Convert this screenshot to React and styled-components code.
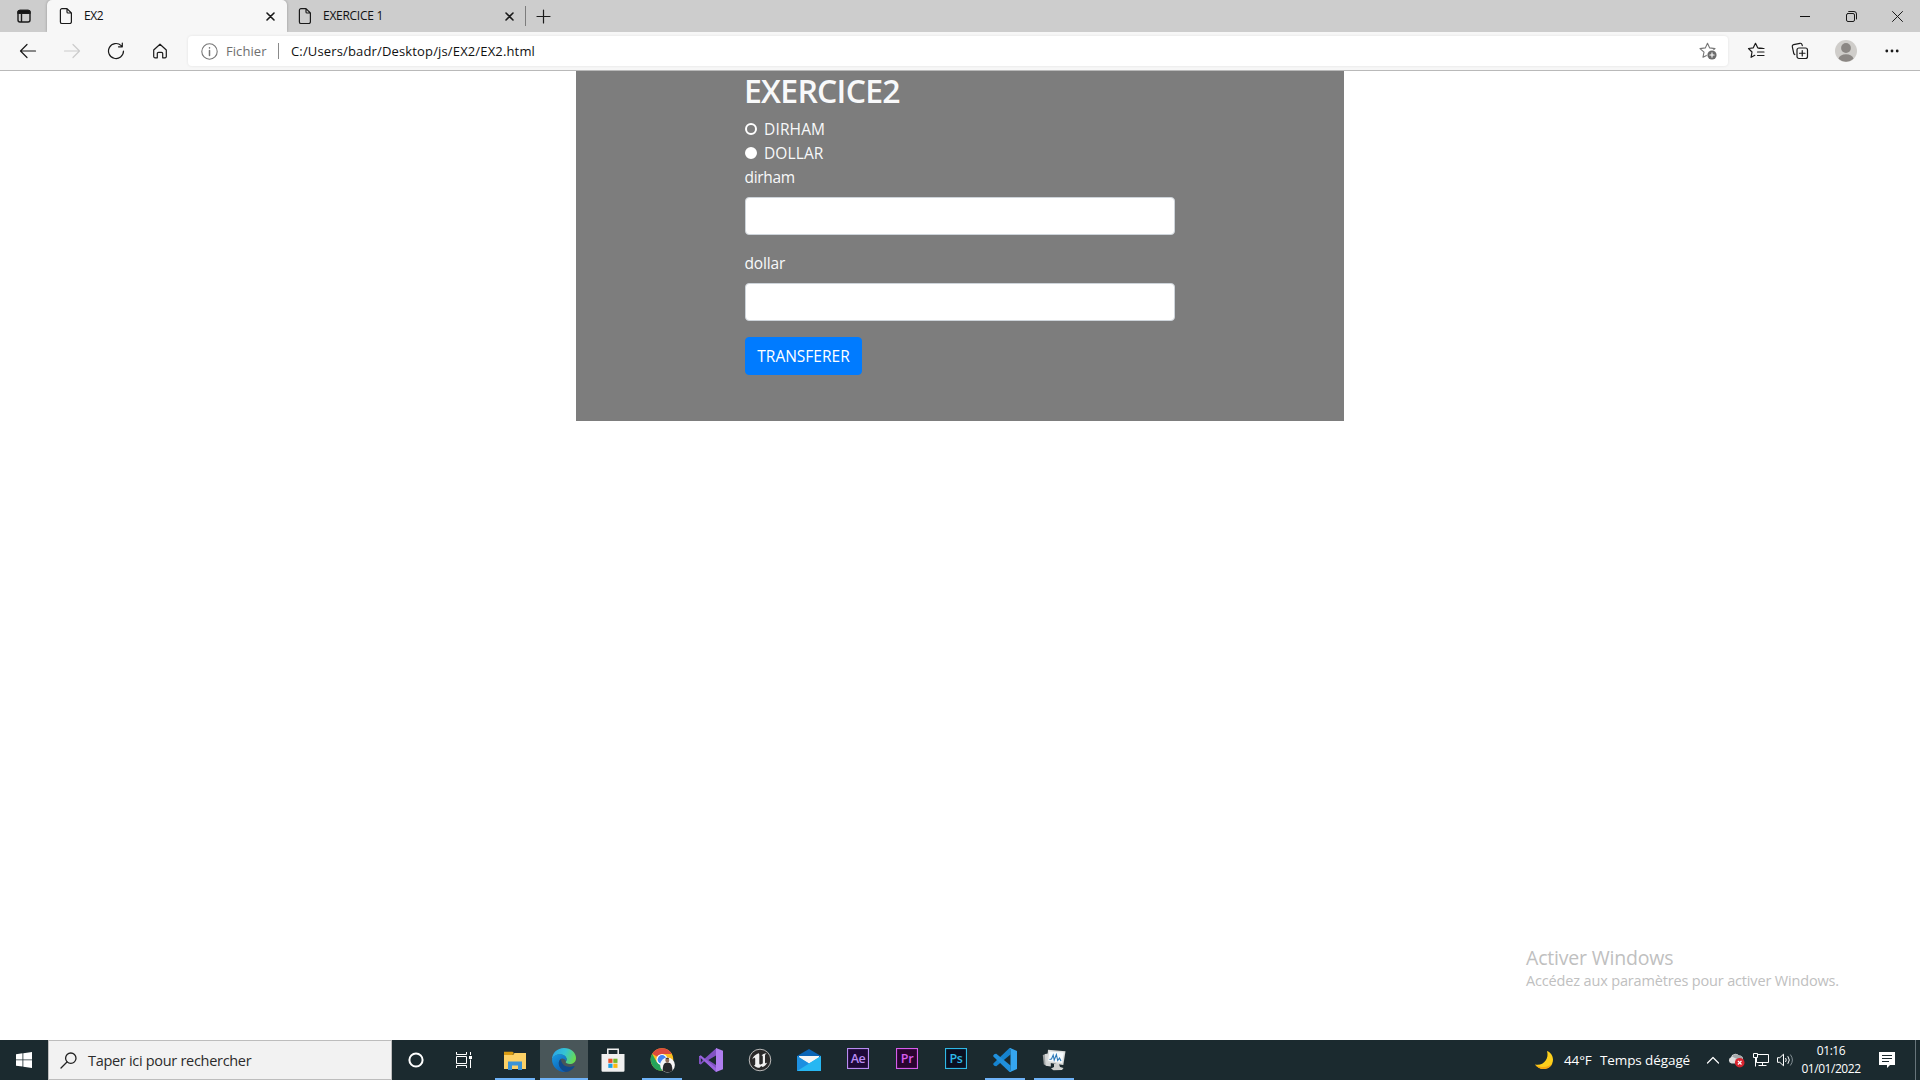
import React, { useState } from "react";
import styled, { createGlobalStyle } from "styled-components";

const Global = createGlobalStyle`
  * { box-sizing: border-box; }
  body { margin: 0; background: #fff; overflow: hidden; }
  svg { display: block; flex: none; }
`;

const Screen = styled.div`
  position: relative;
  width: 1920px;
  height: 1080px;
  display: flex;
  flex-direction: column;
  font-family: "Open Sans", "Noto Sans", sans-serif;
  color: #111;
  background: #fff;
`;

const Text = styled.span`
  font-size: ${(p) => p.$size}px;
  letter-spacing: ${(p) => p.$track || 0}px;
  color: ${(p) => p.$color || "inherit"};
  white-space: nowrap;
`;

/* Browser chrome */
const TabStrip = styled.header`
  display: flex;
  height: 32px;
  background: #cdcdcd;
`;
const TabActions = styled.div`
  width: 47px;
  display: flex;
  align-items: center;
  padding-left: 16px;
`;
const Tab = styled.div`
  width: ${(p) => p.$width}px;
  height: 32px;
  display: flex;
  align-items: center;
  padding: 0 ${(p) => p.$right}px 0 ${(p) => p.$left}px;
  background: ${(p) => (p.$active ? "#f7f7f7" : "transparent")};
  border-radius: 5px 5px 0 0;
  box-shadow: ${(p) => (p.$active ? "0 0 3px rgba(0, 0, 0, 0.28)" : "none")};
  clip-path: inset(0 -4px 0 -4px);
`;
const TabTitle = styled(Text)`
  flex: 1;
  padding: 0 0 1px 11px;
`;
const NewTab = styled.div`
  display: flex;
  align-items: center;
  height: 32px;
  gap: 10px;
`;
const TabDivider = styled.div`
  width: 1px;
  height: 20px;
  background: #7c7c7c;
`;
const WindowButtons = styled.div`
  margin-left: auto;
  display: flex;
`;
const WindowButton = styled.div`
  width: 46px;
  height: 32px;
  display: flex;
  align-items: center;
  justify-content: center;
`;

const Toolbar = styled.div`
  display: flex;
  align-items: center;
  height: 39px;
  background: #f7f7f7;
  border-bottom: 1px solid #b9b9b9;
`;
const NavButton = styled.div`
  width: 44px;
  height: 38px;
  display: flex;
  align-items: center;
  justify-content: center;
`;
const NavGroup = styled.div`
  display: flex;
  width: 188px;
  padding-left: 6px;
`;
const AddressBar = styled.div`
  width: 1540px;
  height: 30px;
  display: flex;
  align-items: center;
  padding: 0 11px 0 13px;
  background: #fff;
  border-radius: 4px;
  box-shadow: 0 0 3px rgba(0, 0, 0, 0.09);
`;
const SchemeLabel = styled(Text)`
  margin-left: 8px;
  width: 52px;
`;
const AddressDivider = styled.div`
  width: 1px;
  height: 16px;
  margin-right: 12px;
  background: #8a8a8a;
`;
const Url = styled(Text)`
  flex: 1;
`;
const ToolGroup = styled.div`
  display: flex;
  align-items: center;
  padding-left: 5px;
`;
const ToolButton = styled.div`
  width: ${(p) => p.$width || 44}px;
  display: flex;
  justify-content: center;
`;

/* Page */
const Page = styled.main`
  flex: 1;
  display: flex;
  justify-content: center;
  align-items: flex-start;
`;
const Panel = styled.section`
  width: 768px;
  height: 350px;
  padding: 1px 169px 0;
  background: #7d7d7d;
  color: #f8f9fa;
  font-size: 15.5px;
  line-height: 24px;
`;
const Heading = styled.h2`
  margin: 0 0 7px -1px;
  font-size: 32px;
  font-weight: 600;
  line-height: 38.4px;
  letter-spacing: -0.75px;
`;
const Choice = styled.label`
  display: flex;
  align-items: center;
  gap: 7px;
  height: 24px;
  letter-spacing: ${(p) => p.$track}px;
`;
const Radio = styled.input`
  appearance: none;
  width: 12px;
  height: 12px;
  margin: 0 0 1px;
  border-radius: 50%;
  border: 2px solid #fff;
  background: ${(p) => (p.checked ? "#fff" : "transparent")};
`;
const Field = styled.div`
  margin-bottom: 16px;
`;
const FieldLabel = styled.label`
  display: block;
  margin: 0 0 8px -0.5px;
  letter-spacing: ${(p) => p.$track}px;
`;
const Input = styled.input`
  display: block;
  width: 100%;
  height: 38px;
  padding: 6px 12px;
  font: inherit;
  background: #fff;
  border: 1px solid #ced4da;
  border-radius: 4px;
  outline: none;
`;
const Submit = styled.button`
  display: block;
  height: 38px;
  width: 117px;
  padding: 6px 0;
  border: 1px solid #007bff;
  border-radius: 4px;
  background: #007bff;
  color: #fff;
  font: inherit;
`;

const Watermark = styled.div`
  position: absolute;
  left: 1526px;
  top: 945px;
  display: flex;
  flex-direction: column;
  color: #c0c0c0;
`;
const WatermarkLine = styled(Text)`
  line-height: ${(p) => p.$line}px;
`;

/* Taskbar */
const Taskbar = styled.footer`
  display: flex;
  height: 40px;
  background: #1b2a2f;
  color: #fff;
`;
const TaskCell = styled.div`
  width: 48px;
  height: 40px;
  display: flex;
  align-items: center;
  justify-content: center;
`;
const Search = styled.div`
  width: 344px;
  display: flex;
  align-items: center;
  gap: 11px;
  padding-left: 11px;
  background: #f2f2f2;
  border: 1px solid #bdbdbd;
  color: #2b2b2b;
`;
const Apps = styled.div`
  display: flex;
  gap: 1px;
  padding-left: 3px;
`;
const AppCell = styled(TaskCell)`
  padding-top: ${(p) => (p.$running ? 2 : 0)}px;
  flex-direction: column;
  justify-content: space-between;
  background: ${(p) => (p.$active ? "#495659" : "transparent")};
`;
const AppIcon = styled.div`
  flex: 1;
  display: flex;
  align-items: center;
`;
const Underline = styled.div`
  width: ${(p) => (p.$active ? 48 : 40)}px;
  height: 2px;
  background: #6fb3f8;
`;
const AdobeTile = styled.div`
  width: 22px;
  height: 21px;
  margin-bottom: 3px;
  display: flex;
  align-items: center;
  justify-content: center;
  border: 1px solid ${(p) => p.$color};
  box-shadow: inset 0 0 1px ${(p) => p.$color};
  background: ${(p) => p.$fill};
  color: ${(p) => p.$color};
  font-size: 12.5px;
  font-weight: 600;
  line-height: 18px;
  letter-spacing: -0.4px;
`;
const Tray = styled.div`
  margin-left: auto;
  width: 386px;
  display: flex;
  align-items: center;
`;
const Weather = styled.div`
  width: 172px;
  display: flex;
  align-items: center;
`;
const Temperature = styled(Text)`
  width: 36px;
  margin-left: 8px;
`;
const TrayIcons = styled.div`
  width: 86px;
  display: flex;
  align-items: center;
  gap: 8px;
`;
const Clock = styled.div`
  width: 62px;
  margin-left: 8px;
  display: flex;
  flex-direction: column;
  align-items: center;
  line-height: 18px;
`;
const Notifications = styled.div`
  margin-left: 17px;
`;
const ShowDesktop = styled.div`
  margin-left: auto;
  width: 5px;
  height: 40px;
  border-left: 1px solid #67747a;
`;

const Line = ({ w = 16, h = 16, box, children, color = "#1a1a1a", sw = 1.2 }) => (
  <svg width={w} height={h} viewBox={box || `0 0 ${w} ${h}`} fill="none" stroke={color} strokeWidth={sw} strokeLinecap="round" strokeLinejoin="round">
    {children}
  </svg>
);

const PageIcon = () => (
  <Line w={14} h={18}>
    <path d="M3 1.6h5l4.4 4.4v8.9a1.6 1.6 0 0 1-1.6 1.6H3a1.6 1.6 0 0 1-1.6-1.6V3.2A1.6 1.6 0 0 1 3 1.6zM8 1.8v3.1A1.1 1.1 0 0 0 9.1 6h3.2" />
  </Line>
);
const CloseIcon = () => (
  <Line w={9} h={9} sw={1.6}>
    <path d="M1 1l7 7M8 1L1 8" />
  </Line>
);

const EdgeLogo = () => (
  <svg width="24" height="24" viewBox="0 0 24 24">
    <defs>
      <linearGradient id="edgeTop" x1="0" y1="0.3" x2="1" y2="0.6">
        <stop offset="0" stopColor="#2aa5e8" />
        <stop offset="0.5" stopColor="#35c4d3" />
        <stop offset="1" stopColor="#6bdc4b" />
      </linearGradient>
      <linearGradient id="edgeBody" x1="0" y1="0" x2="0.6" y2="1">
        <stop offset="0" stopColor="#1a9be0" />
        <stop offset="1" stopColor="#0b62b8" />
      </linearGradient>
    </defs>
    <path d="M0 11.500C0 5 5.300 0 12 0c7 0 12 4.800 12 10 0 4-3 6-6.200 6-2.600 0-4.100-1-4.100-1.900 0-.6.900-1 .9-2.700C14.600 8.500 11.500 6.500 8 6.500c-4 0-7 2-8 5z" fill="url(#edgeTop)" />
    <path d="M0 11.500C.8 8.200 4.200 6.300 8 6.300c3.700 0 6.600 2.200 6.600 5 0 .8-.2 1.500-.6 2-.8-2-2.200-2.900-3.500-2.900-2 0-3.700 2-3.700 4.600 0 4 3.300 7.500 7.200 8.800C6.500 25 0 19 0 11.500z" fill="url(#edgeBody)" />
    <path d="M9 11.200c-1.500.9-2.300 2.600-2.200 4.500.2 4 3.600 7.300 7.200 8.200 3.400-.4 6.500-2.300 8.400-5.200.3-.5 0-.8-.5-.6C17.500 20.200 9.500 18.500 9 11.200z" fill="#114a8b" />
  </svg>
);
const ExplorerLogo = () => (
  <svg width="22" height="19" viewBox="0 0 22 19">
    <path d="M0 4h9l1.500-2H22v16H0z" fill="#fdd166" />
    <path d="M0 4h8.500l1.500-2L8.500.8H0z" fill="#d99b12" />
    <path d="M4 19v-8.500h14V19h-4v-4.500H8V19z" fill="#3b93d6" />
  </svg>
);
const StoreLogo = () => (
  <svg width="24" height="24" viewBox="0 0 24 24">
    <path d="M6.800 6V1.200h10.400V6" fill="none" stroke="#f3f3f3" strokeWidth="1.500" />
    <path d="M.5 6h23v16.500a1.200 1.200 0 0 1-1.200 1.200H1.700A1.200 1.200 0 0 1 .5 22.500z" fill="#f0f0f0" />
    <path d="M7.300 10.700h4.200v4.200H7.300z" fill="#e8502a" />
    <path d="M12.300 10.700h4.200v4.200h-4.200z" fill="#76b82a" />
    <path d="M7.300 15.700h4.200v4.200H7.300z" fill="#1ba1e6" />
    <path d="M12.300 15.700h4.200v4.200h-4.200z" fill="#fcb813" />
  </svg>
);
const ChromeLogo = () => (
  <svg width="25" height="26" viewBox="0 0 25 26">
    <circle cx="12" cy="12.500" r="11.300" fill="#fbbd1f" />
    <path d="M12 12.500L2.200 6.800A11.300 11.300 0 0 1 21.800 6.900H12z" fill="#dc4a3d" />
    <path d="M12 12.500l-5 2.900L2.200 6.800A11.300 11.300 0 0 0 12 23.800l4.500-8.600z" fill="#25a35a" />
    <circle cx="12" cy="12.500" r="5.600" fill="#fff" />
    <circle cx="12" cy="12.500" r="4.400" fill="#4285f4" />
    <circle cx="17.500" cy="18" r="7.400" fill="#f6f6f6" />
    <path d="M12.600 23.600c.2-4 .9-6.800 2.400-7.500l2.300-.7 2.500.7c1.600.7 2.400 3 2.700 7.300a7.600 7.600 0 0 1-9.900.2z" fill="#26282c" />
    <ellipse cx="17.300" cy="13.400" rx="1.900" ry="2.400" fill="#8e6d5c" />
    <path d="M15.400 12.500c0-2.400 3.800-2.400 3.800 0l-.8-.8h-2.200z" fill="#2a211e" />
  </svg>
);
const VisualStudioLogo = () => (
  <svg width="24" height="24" viewBox="0 0 24 24">
    <path d="M17.500 0v24L5.500 13.300l-3.600 3.300L0 15.700V8.300l1.900-.9 3.600 3.300zM17 7.500L9.300 12l7.700 5zM1.900 9.600v5L4 12z" fill="#8252c4" fillRule="evenodd" />
    <path d="M17 0l7 2.800v18.400L17 24z" fill="#b07ef0" />
    <path d="M0 8.300l1.900-.9L17 20v4z" fill="#9a65de" />
  </svg>
);
const UnrealLogo = () => (
  <svg width="24" height="24" viewBox="0 0 24 24">
    <circle cx="12" cy="12" r="10.800" fill="#2b2a2a" stroke="#b9b9b9" strokeWidth="1" />
    <path d="M10.500 5.200C7 6.300 4.600 9.200 4.300 11.600c1-1.300 2-2 2.500-1.700.4.200.4.700.4 1.200v5c0 .8-.5 1.200-1.200 1.300 1.400 1.600 3.500 2.300 5.500 2.300l1.700-1.800 1.500 1.200c2.100-.9 3.600-2.500 4.500-4.600-.7.700-1.500 1-1.900.7-.3-.2-.3-.6-.3-1V7.600c0-.8.700-1.800 1.800-2.400-2.200.1-4 .9-5.300 2.300.8-.1 1.300.3 1.300 1.100v6.700c-.6.700-1.500 1.200-2.200 1.200-.9 0-1.300-.5-1.300-1.300V8c0-1.200.2-2.200-.8-2.800z" fill="#f1f1f1" />
  </svg>
);
const MailLogo = () => (
  <svg width="24" height="24" viewBox="0 0 24 24">
    <path d="M0 8l12-7 12 7v3H0z" fill="#0a64b5" />
    <path d="M2 8h20v8H2z" fill="#f5f5f5" />
    <path d="M0 8l12 7.500L24 8v15H0z" fill="#30a9ea" />
    <path d="M24 8v15H0l12-7.500z" fill="#27b7f2" />
    <path d="M0 8v15l12-7.500z" fill="#1d8fe0" />
  </svg>
);
const CodeLogo = () => (
  <svg width="24" height="24" viewBox="0 0 24 24">
    <path d="M17.500 0v6.500L3.300 18.200 1.700 18.100.3 16.800v-1.200L16 .5z" fill="#1683cf" />
    <path d="M17.500 24v-6.500L3.300 5.800l-1.600.1L.3 7.200v1.200L16 23.500z" fill="#2090dc" />
    <path d="M17.200 0L24 3v18l-6.800 3-1.500-.6c1 .4 1.800-.2 1.800-1.300V1.900c0-1.100-.8-1.700-1.800-1.300z" fill="#35a5ef" />
  </svg>
);
const MonitorLogo = () => (
  <svg width="24" height="22" viewBox="0 0 24 22">
    <path d="M.8 6l5-1.500 1 12.500-5-1.500z" fill="#9da1a2" />
    <path d="M2.800 5l6-.5v13l-5.200-.8z" fill="#d2d5d5" />
    <path d="M12 15h5l1 3 3.500 1-1.500 2-8.500.3-2.500-1.800 3-1.500z" fill="#cfd1cf" />
    <path d="M6 .8l17.500 1.400L21.300 16 4.800 13.500z" fill="#d9dbda" />
    <path d="M7.300 2.400l14.500 1.200-1.700 10.500L6.300 12z" fill="#f5fafc" />
    <path d="M7.500 10.500l2-.5 1.700-4 1 5 2.200-5.500 1.300 6 1.800-2.500 1.500 3" fill="none" stroke="#2a78b8" strokeWidth="1.100" />
  </svg>
);

const apps = [
  { name: "explorer", icon: <ExplorerLogo />, running: true },
  { name: "edge", icon: <EdgeLogo />, running: true, active: true },
  { name: "store", icon: <StoreLogo /> },
  { name: "chrome", icon: <ChromeLogo />, running: true },
  { name: "vs", icon: <VisualStudioLogo /> },
  { name: "unreal", icon: <UnrealLogo /> },
  { name: "mail", icon: <MailLogo /> },
  { name: "ae", icon: <AdobeTile $color="#b98bf2" $fill="#1d0836">Ae</AdobeTile> },
  { name: "pr", icon: <AdobeTile $color="#d75cec" $fill="#2a0430">Pr</AdobeTile> },
  { name: "ps", icon: <AdobeTile $color="#2fb8e6" $fill="#0a0f20">Ps</AdobeTile> },
  { name: "code", icon: <CodeLogo />, running: true },
  { name: "monitor", icon: <MonitorLogo />, running: true },
];

export default function App() {
  const [currency, setCurrency] = useState("DOLLAR");
  return (
    <Screen>
      <Global />
      <TabStrip>
        <TabActions>
          <Line w={16} h={16} sw={1.4}>
            <path d="M2 4.500a2 2 0 0 1 2-2h8a2 2 0 0 1 2 2V12a2 2 0 0 1-2 2H4a2 2 0 0 1-2-2zM5.500 5v9" />
            <path d="M2 4.500a2 2 0 0 1 2-2h8a2 2 0 0 1 2 2v.8H2z" fill="#111" />
          </Line>
        </TabActions>
        <Tab $active $width={240} $left={12} $right={12}>
          <PageIcon />
          <TabTitle $size={12} $track={-0.4}>EX2</TabTitle>
          <CloseIcon />
        </Tab>
        <Tab $width={238} $left={11} $right={11}>
          <PageIcon />
          <TabTitle $size={12} $track={-0.28}>EXERCICE 1</TabTitle>
          <CloseIcon />
        </Tab>
        <NewTab>
          <TabDivider />
          <Line w={15} h={15}>
            <path d="M7.500 1v13M1 7.500h13" />
          </Line>
        </NewTab>
        <WindowButtons>
          <WindowButton>
            <svg width="10" height="10"><path d="M0 5.500h10" stroke="#111" /></svg>
          </WindowButton>
          <WindowButton>
            <Line w={11} h={11} sw={1}>
              <rect x="0.500" y="2.500" width="8" height="8" rx="1.500" />
              <path d="M2.700.5h5.300a2.500 2.500 0 0 1 2.500 2.500v5" />
            </Line>
          </WindowButton>
          <WindowButton>
            <Line w={11} h={11} sw={1}>
              <path d="M.5.500l10 10M10.500.500l-10 10" />
            </Line>
          </WindowButton>
        </WindowButtons>
      </TabStrip>

      <Toolbar>
        <NavGroup>
          <NavButton>
            <Line w={18} h={16}><path d="M16.500 8H1.500M8 1.500L1.500 8 8 14.500" /></Line>
          </NavButton>
          <NavButton>
            <Line w={18} h={16} color="#cccccc"><path d="M1.500 8h15M10 1.500L16.500 8 10 14.500" /></Line>
          </NavButton>
          <NavButton>
            <Line w={18} h={18}><path d="M16.500 9A7.500 7.500 0 1 1 14.200 3.600L15 4.400M15.300 1v3.800h-3.800" /></Line>
          </NavButton>
          <NavButton>
            <Line w={16} h={16}><path d="M1.700 7L8 1.200 14.300 7v6.600a1.200 1.200 0 0 1-1.200 1.200h-2.400V10.500a1.200 1.200 0 0 0-1.200-1.200h-3a1.200 1.200 0 0 0-1.200 1.200v4.300H2.900a1.200 1.200 0 0 1-1.200-1.200z" /></Line>
          </NavButton>
        </NavGroup>
        <AddressBar>
          <Line w={17} h={17} color="#777" sw={1.1}>
            <circle cx="8.500" cy="8.500" r="7.700" />
            <path d="M8.500 7.500v5M8.500 4.700v.2" strokeWidth="1.500" />
          </Line>
          <SchemeLabel $size={13} $track={0.06} $color="#6f6f6f">Fichier</SchemeLabel>
          <AddressDivider />
          <Url $size={13} $track={0.15}>C:/Users/badr/Desktop/js/EX2/EX2.html</Url>
          <Line w={18} h={18} color="#777" sw={1.1}>
            <path d="M8.500 1.200l2.200 4.700 5.300.7-4 3.600 1 5-4.500-2.300L4 15.200l1-5-4-3.600 5.300-.7z" />
            <circle cx="13" cy="13" r="5.300" fill="#fff" stroke="none" />
            <circle cx="13" cy="13" r="4.600" fill="#6c6c6c" stroke="none" />
            <path d="M13 10.900v4.200M10.900 13h4.200" stroke="#fff" />
          </Line>
        </AddressBar>
        <ToolGroup>
          <ToolButton $width={46}>
            <Line w={18} h={18}>
              <path d="M15.500 6.400L10.700 5.800 8.500 1.300 6.300 5.800l-4.800.7L5 10l-.9 5.300 3.700-2" />
              <path d="M12 6.500h5M10.500 10H17M10.500 13.500H17" />
            </Line>
          </ToolButton>
          <ToolButton $width={42}>
            <Line w={18} h={18}>
              <path d="M3.800 12.500L2.800 11.700 1.300 4.700A1.700 1.700 0 0 1 2.600 2.700L9 1.300a1.700 1.700 0 0 1 2 1.300l.3 1" />
              <rect x="6" y="6" width="10.500" height="10.500" rx="2" />
              <path d="M11.250 8.500v5.500M8.500 11.250h5.500" />
            </Line>
          </ToolButton>
          <ToolButton $width={50}>
            <svg width="22" height="22" viewBox="0 0 22 22">
              <circle cx="11" cy="11" r="11" fill="#cfcdca" />
              <circle cx="11" cy="8" r="4.900" fill="#8b8784" />
              <path d="M3.500 18.800c.8-3 3.500-4.600 7.500-4.600s6.700 1.600 7.500 4.600A11 11 0 0 1 3.500 18.800z" fill="#8b8784" />
            </svg>
          </ToolButton>
          <ToolButton $width={42}>
            <svg width="14" height="4" fill="#1a1a1a">
              <circle cx="1.800" cy="2" r="1.400" />
              <circle cx="7" cy="2" r="1.400" />
              <circle cx="12.200" cy="2" r="1.400" />
            </svg>
          </ToolButton>
        </ToolGroup>
      </Toolbar>

      <Page>
        <Panel>
          <Heading>EXERCICE2</Heading>
          <Choice $track={0.15}>
            <Radio type="radio" name="currency" checked={currency === "DIRHAM"} onChange={() => setCurrency("DIRHAM")} />
            DIRHAM
          </Choice>
          <Choice $track={0.1}>
            <Radio type="radio" name="currency" checked={currency === "DOLLAR"} onChange={() => setCurrency("DOLLAR")} />
            DOLLAR
          </Choice>
          <Field>
            <FieldLabel $track={-0.3}>dirham</FieldLabel>
            <Input />
          </Field>
          <Field>
            <FieldLabel $track={-0.15}>dollar</FieldLabel>
            <Input />
          </Field>
          <Submit>TRANSFERER</Submit>
        </Panel>
      </Page>

      <Watermark>
        <WatermarkLine $size={19.5} $track={-0.2} $line={26}>Activer Windows</WatermarkLine>
        <WatermarkLine $size={14.5} $track={-0.16} $line={20}>Accédez aux paramètres pour activer Windows.</WatermarkLine>
      </Watermark>

      <Taskbar>
        <TaskCell>
          <svg width="16" height="16" viewBox="0 0 16 16" fill="#fff">
            <path d="M0 2.200L6.500 1.300v6.200H0zM7.300 1.200L16 0v7.500H7.300zM0 8.300h6.500v6.300L0 13.700zM7.300 8.300H16V16l-8.700-1.200z" />
          </svg>
        </TaskCell>
        <Search>
          <Line w={17} h={17} sw={1.3} color="#222">
            <circle cx="10.800" cy="6.200" r="5.200" />
            <path d="M7 10L1 16" />
          </Line>
          <Text $size={14.5} $track={-0.3}>Taper ici pour rechercher</Text>
        </Search>
        <TaskCell>
          <svg width="16" height="16"><circle cx="8" cy="8" r="6.600" fill="none" stroke="#fff" strokeWidth="2" /></svg>
        </TaskCell>
        <TaskCell>
          <svg width="16" height="16" fill="none" stroke="#fff">
            <path d="M.5 0v2.500h10V0M.5 16v-2.500h10V16M.5 4.500h10v7H.5zM14.500 0v3M14.500 7.500V16" />
            <path d="M13 4h3v3h-3z" fill="#fff" stroke="none" />
          </svg>
        </TaskCell>
        <Apps>
          {apps.map((a) => (
            <AppCell key={a.name} $active={a.active} $running={a.running}>
              <AppIcon>{a.icon}</AppIcon>
              {a.running && <Underline $active={a.active} />}
            </AppCell>
          ))}
        </Apps>
        <Tray>
          <Weather>
            <svg width="22" height="20" viewBox="0 0 22 20">
              <path d="M13 1c3.500 1.300 6 4.500 6 8.700 0 5-4 9.300-9.300 9.300-3.700 0-7-2-8.700-4.500C9 16.500 15.500 9 13 1z" fill="#fccf1c" />
              <path d="M1 14.500C3 17 6 19 9.700 19c4 0 7.200-2.200 8.700-5.500-4 4-11 5-17.400 1z" fill="#f7a712" />
            </svg>
            <Temperature $size={13.5} $track={-0.15}>44°F</Temperature>
            <Text $size={13.5} $track={-0.1}>Temps dégagé</Text>
          </Weather>
          <TrayIcons>
            <Line w={14} h={8} color="#fff"><path d="M1.500 7L7 1.500 12.500 7" /></Line>
            <svg width="17" height="16" viewBox="0 0 17 16">
              <path d="M3.500 11.500A3.300 3.300 0 0 1 3 5.200 4.600 4.600 0 0 1 11 3.500a3.600 3.600 0 0 1 4 4l-2 4z" fill="#dedede" />
              <path d="M4 4.500A4.600 4.600 0 0 1 11 3.500a3.600 3.600 0 0 1 3.800 3.200L11 8z" fill="#a5a9ab" />
              <circle cx="11.700" cy="10.700" r="4.800" fill="#d8242f" />
              <path d="M9.900 8.900l3.600 3.600M13.500 8.900l-3.600 3.600" stroke="#fff" strokeWidth="1.300" />
            </svg>
            <svg width="16" height="16" viewBox="0 0 16 16" fill="none" stroke="#fff">
              <path d="M4.500 2.500h11v8H3.500V6M9.500 10.500V13.500M5.500 13.500h8M.5 1.500h4v4h-4zM2.500 5.500v9" />
            </svg>
            <svg width="17" height="14" viewBox="0 0 17 14" fill="none" stroke="#fff">
              <path d="M.5 4.700h2.300L6.500 1.200v11.600L2.800 9.300H.5zM8.500 5q1.500 2 0 4M10.800 3.200q3 3.800 0 7.600" />
              <path d="M13.300 1.500q4.200 5.500 0 11" stroke="#849095" />
            </svg>
          </TrayIcons>
          <Clock>
            <Text $size={12} $track={-0.45}>01:16</Text>
            <Text $size={12} $track={-0.45}>01/01/2022</Text>
          </Clock>
          <Notifications>
            <svg width="16" height="16" viewBox="0 0 16 16">
              <path d="M0 0h16v13H11l-3 3v-3H0z" fill="#fff" />
              <path d="M3 3.500h10M3 6.500h10M3 9.500h7" stroke="#1b2a2f" />
            </svg>
          </Notifications>
          <ShowDesktop />
        </Tray>
      </Taskbar>
    </Screen>
  );
}
